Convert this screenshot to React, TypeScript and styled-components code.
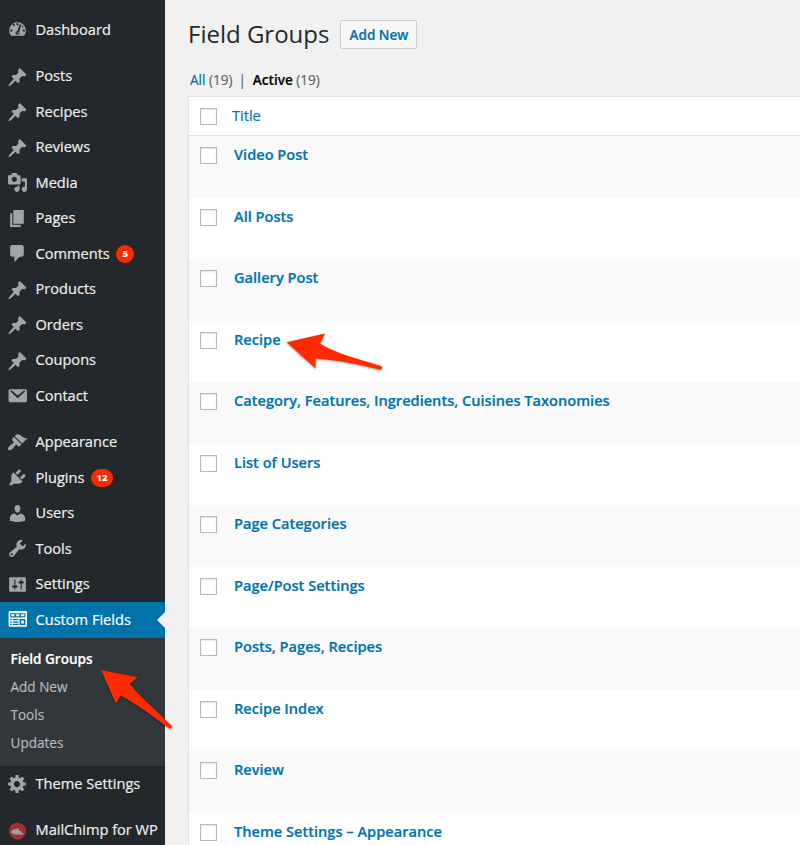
import React from "react";
import styled, { createGlobalStyle, css } from "styled-components";

const GlobalStyle = createGlobalStyle`
  * { box-sizing: border-box; }
  html, body { margin: 0; padding: 0; }
  body {
    height: 845px;
    overflow: hidden;
    background: #f1f1f1;
    font-family: "Open Sans", "Noto Sans", sans-serif;
    -webkit-font-smoothing: antialiased;
    -webkit-text-stroke: 0.2px currentColor;
  }
  ul { list-style: none; margin: 0; padding: 0; }
`;

const Shell = styled.div`
  position: relative;
  display: flex;
  width: 800px;
  height: 845px;
  overflow: hidden;
`;

const Sidebar = styled.nav`
  flex: 0 0 165px;
  height: 845px;
  padding-top: 12px;
  overflow: hidden;
  background: #22282b;
`;

const MenuList = styled.ul<{ $gap?: boolean }>`
  margin-bottom: ${(p) => (p.$gap ? "11px" : "0")};
`;

const MenuItem = styled.li<{ $active?: boolean }>`
  position: relative;
  display: flex;
  align-items: center;
  height: 35.5px;
  padding-left: 6.5px;
  font-size: 14.6px;
  line-height: 20px;
  white-space: nowrap;
  color: ${(p) => (p.$active ? "#fff" : "#eee")};
  ${(p) =>
    p.$active &&
    css`
      background: #0073aa;
      &::after {
        content: "";
        position: absolute;
        right: 0;
        top: 9.5px;
        border: 8.3px solid transparent;
        border-right-color: #f1f1f1;
        border-left-width: 0;
      }
    `}
`;

const MenuIcon = styled.svg<{ $active?: boolean }>`
  flex: none;
  width: 21px;
  height: 21px;
  margin-right: 8px;
  fill: ${(p) => (p.$active ? "#fff" : "#a0a5aa")};
`;

const MenuLabel = styled.span`
  padding-bottom: 2px;
`;

const Badge = styled.span`
  min-width: 18px;
  height: 18px;
  margin: 1px 0 0 6.5px;
  padding: 0 5.500px;
  border-radius: 9px;
  background: #ff2a00;
  color: #fff;
  font-size: 9.6px;
  font-weight: 700;
  line-height: 18px;
  text-align: center;
`;

const Submenu = styled.ul`
  height: 128.5px;
  padding: 7px 0 7px 10.5px;
  background: #32373c;
`;

const SubmenuItem = styled.li<{ $current?: boolean }>`
  height: 28.1px;
  font-size: 13.55px;
  line-height: 28.1px;
  font-weight: ${(p) => (p.$current ? 600 : 400)};
  color: ${(p) => (p.$current ? "#fff" : "#b4b9be")};
`;

const Main = styled.main`
  flex: 1;
  min-width: 0;
  padding-left: 23px;
`;

const TitleBar = styled.header`
  display: flex;
  align-items: flex-start;
  gap: 11px;
  height: 50px;
  padding-top: 19px;
`;

const PageTitle = styled.h1`
  margin: 0;
  font-size: 24px;
  font-weight: 400;
  line-height: 30px;
  color: #23282d;
  -webkit-text-stroke-width: 0;
`;

const AddButton = styled.a`
  width: 77px;
  height: 29px;
  margin-top: 1px;
  border: 1px solid #ccc;
  border-radius: 2px;
  background: #f7f7f7;
  color: #0073aa;
  font-size: 13.55px;
  font-weight: 600;
  line-height: 28px;
  text-align: center;
`;

const Filters = styled.ul`
  display: flex;
  height: 46px;
  padding: 19px 0 0 2px;
  font-size: 13.55px;
  line-height: 22px;
  color: #666;
`;

const FilterLabel = styled.a<{ $current?: boolean }>`
  margin-right: 3.5px;
  color: ${(p) => (p.$current ? "#000" : "#0073aa")};
  font-weight: ${(p) => (p.$current ? 600 : 400)};
`;

const Divider = styled.span`
  margin: 0 7px 0 6px;
`;

const Table = styled.div`
  width: 640px;
  height: 760px;
  border: 1px solid #e1e1e1;
  background: #fff;
`;

const HeadRow = styled.div`
  display: flex;
  align-items: center;
  gap: 15px;
  height: 39px;
  padding-left: 11px;
  border-bottom: 1px solid #e1e1e1;
  color: #0073aa;
  font-size: 14.6px;
`;

const HeadLabel = styled.span`
  padding-bottom: 2px;
`;

const Row = styled.div`
  display: flex;
  align-items: flex-start;
  gap: 17px;
  height: 61.56px;
  padding: 8px 0 0 11px;
  &:nth-child(even) {
    background: #f9f9f9;
  }
`;

const RowTitle = styled.a`
  color: #0073aa;
  font-size: 14.6px;
  font-weight: 600;
  line-height: 20px;
`;

const Checkbox = styled.span<{ $inRow?: boolean }>`
  flex: none;
  width: 17px;
  height: 17px;
  margin-top: ${(p) => (p.$inRow ? "3px" : "0")};
  border: 1px solid #b4b9be;
  background: #fff;
  box-shadow: inset 0 1px 2px rgba(0, 0, 0, 0.1);
`;

const Arrow = styled.svg<{ $x: number; $y: number }>`
  position: absolute;
  left: ${(p) => p.$x}px;
  top: ${(p) => p.$y}px;
  overflow: visible;
  fill: #ff2a00;
  filter: drop-shadow(0 1px 1px rgba(0, 0, 0, 0.35));
`;

const glyphs = {
  pin: "M10.44 3.72l1.82-1.82 6.36 6.35-1.83 1.82c-1.05-.68-2.48-.57-3.41.36l-.75.75c-.92.93-1.04 2.35-.35 3.41l-1.83 1.82-2.41-2.41-2.8 2.79c-.42.42-3.38 2.71-3.8 2.29s1.86-3.39 2.28-3.81l2.79-2.79L4.1 10.06l1.83-1.82c1.05.69 2.48.57 3.4-.36l.75-.75c.93-.92 1.05-2.35.36-3.41z",
  media:
    "M13 11V4c0-.55-.45-1-1-1h-1.67L9 1H5L3.67 3H2c-.55 0-1 .45-1 1v7c0 .55.45 1 1 1h10c.55 0 1-.45 1-1zM7 4.5c1.38 0 2.5 1.12 2.5 2.5S8.38 9.5 7 9.5 4.5 8.38 4.5 7 5.62 4.5 7 4.5zM14 6h5v10.5c0 1.38-1.12 2.5-2.5 2.5S14 17.88 14 16.5s1.12-2.5 2.5-2.5c.17 0 .34.02.5.05V9h-3V6zm-4 8.05V13h2v3.5c0 1.38-1.12 2.5-2.5 2.5S7 17.88 7 16.5 8.12 14 9.5 14c.17 0 .34.02.5.05z",
  page: "M6 15V2h10v13H6zm-1 1h8v2H3V5h2v11z",
  comment:
    "M5 2h9c1.1 0 2 .9 2 2v7c0 1.1-.9 2-2 2h-2l-5 5v-5H5c-1.1 0-2-.9-2-2V4c0-1.1.9-2 2-2z",
  mail: "M3 4h14.5c.83 0 1.5.67 1.5 1.500v9.500c0 .83-.67 1.500-1.500 1.500H3c-.83 0-1.500-.67-1.500-1.500V5.500C1.500 4.670 2.170 4 3 4zM3.700 5.400c-.5.300-.4.800-.1 1.100L10.200 12.600l6.700-6.100c.3-.3.400-.8-.1-1.100-.5-.3-.8-.1-1.100.1L10.200 10.100 4.800 5.500c-.3-.2-.6-.4-1.100-.1z",
  appearance:
    "M14.48 11.06L7.41 3.99l1.5-1.5c.5-.56 2.3-.47 3.51.32 1.21.8 1.43 1.28 2.91 2.1 1.18.64 2.45 1.26 4.45.85zm-.71.71L6.7 4.7 4.93 6.47c-.39.39-.39 1.02 0 1.41l1.06 1.06c.39.39.39 1.03 0 1.42-.6.6-1.43 1.11-2.21 1.69-.35.26-.7.53-1.01.84C1.43 14.23.4 16.08 1.4 17.07c.99 1 2.84-.03 4.18-1.36.31-.31.58-.66.85-1.02.57-.78 1.08-1.61 1.69-2.21.39-.39 1.02-.39 1.41 0l1.06 1.06c.39.39 1.02.39 1.41 0z",
  plugin:
    "M13.11 4.36L9.87 7.6 8 5.73l3.24-3.24c.35-.34 1.05-.2 1.56.32.52.51.66 1.21.31 1.55zm-8 1.77l.91-1.12 9.01 9.01-1.19.84c-.71.71-2.63 1.16-3.82 1.16H6.14L4.9 17.26c-.59.59-1.54.59-2.12 0-.59-.58-.59-1.53 0-2.12l1.24-1.24v-3.88c0-1.13.4-3.19 1.09-3.89zm7.26 3.97l3.24-3.24c.34-.35 1.04-.21 1.55.31.52.51.66 1.21.31 1.55l-3.24 3.25z",
  user: "M10 9.25c-2.27 0-2.73-3.44-2.73-3.44C7 4.02 7.82 2 9.97 2c2.16 0 2.98 2.02 2.71 3.81 0 0-.41 3.44-2.68 3.44zm0 2.57L12.720 10c2.390 0 4.520 2.330 4.520 4.530v2.490s-3.650 1.130-7.240 1.130c-3.650 0-7.240-1.130-7.240-1.130v-2.490c0-2.250 1.940-4.480 4.470-4.480z",
  wrench:
    "M16.68 9.77c-1.34 1.34-3.3 1.67-4.95.99l-5.41 6.52c-.99.99-2.59.99-3.58 0s-.99-2.59 0-3.57l6.52-5.42c-.68-1.65-.35-3.61.99-4.95 1.28-1.28 3.12-1.62 4.72-1.06l-2.89 2.89 2.82 2.82 2.86-2.87c.53 1.58.18 3.39-1.08 4.65zM3.81 16.21c.4.39 1.04.39 1.43 0 .4-.4.4-1.04 0-1.43-.39-.4-1.03-.4-1.43 0-.39.39-.39 1.03 0 1.43z",
  sliders:
    "M18 16V4c0-.55-.45-1-1-1H3c-.55 0-1 .45-1 1v12c0 .55.45 1 1 1h14c.55 0 1-.45 1-1zM8 11h1c.55 0 1 .45 1 1s-.45 1-1 1H8v1.5c0 .28-.22.5-.5.5s-.5-.22-.5-.5V13H6c-.55 0-1-.45-1-1s.45-1 1-1h1V5.5c0-.28.22-.5.5-.5s.5.22.5.5V11zm5-2h-1c-.55 0-1-.45-1-1s.45-1 1-1h1V5.5c0-.28.22-.5.5-.5s.5.22.5.5V7h1c.55 0 1 .45 1 1s-.45 1-1 1h-1v5.5c0 .28-.22.5-.5.5s-.5-.22-.5-.5V9z",
  fields:
    "M18 17H2.500c-.55 0-1-.45-1-1V3c0-.55.45-1 1-1H18c.55 0 1 .45 1 1v13c0 .55-.45 1-1 1zM3 4v4h14.500V4zM4 5h3.200v2H4zM8.700 5h3.200v2H8.700zM13.300 5h3.200v2h-3.200zM3 9.500v1.200h1.500V9.500zM5.500 9.500v1.200H11V9.500zM3 11.800v1.200h1.500v-1.200zM5.500 11.800v1.200H11v-1.200zM3 14.100v1.200h1.500v-1.200zM5.500 14.100v1.200H11v-1.200zM12 9.500v5.800h5.500V9.500zM13.500 11h2.600v2.800h-2.600z",
  gear: "M18 12h-2.18c-.17.7-.44 1.35-.81 1.93l1.54 1.54-2.1 2.1-1.54-1.54c-.58.36-1.23.63-1.91.79V19H8v-2.18c-.68-.16-1.33-.43-1.91-.79l-1.54 1.54-2.12-2.12 1.54-1.54c-.36-.58-.63-1.23-.79-1.91H1V9.03h2.17c.16-.7.44-1.35.8-1.94L2.43 5.55l2.1-2.1 1.54 1.54c.58-.37 1.24-.64 1.93-.81V2h3v2.18c.68.16 1.33.43 1.91.79l1.54-1.54 2.12 2.12-1.54 1.54c.36.59.64 1.24.8 1.94H18V12zm-8.5 1.5c1.66 0 3-1.34 3-3s-1.34-3-3-3-3 1.34-3 3 1.34 3 3 3z",
  gauge:
    "M3.76 16h12.48A8 8 0 1 0 3.76 16zM9 4h2v2H9zM5.200 5.700l1.300-1.300 1.300 1.300-1.300 1.300zM3 10h2v2H3zM15 10h2v2h-2zM13.900 7.400l1-1 1 1-1 1zM12.300 4.800l1.300.600-2 7.100c.500 1.500-.2 2.500-1.600 2.500s-2.300-1.200-1.700-2.300c.3-.7.900-1 1.500-1.100zM9.900 12.300v1.500h.9v-1.500z",
};

type Glyph = keyof typeof glyphs | "mailchimp";

function ItemIcon({ name, active }: { name: Glyph; active?: boolean }) {
  if (name === "mailchimp") {
    return (
      <MenuIcon viewBox="0 0 20 20">
        <circle cx="10" cy="10.500" r="8.200" fill="#a2302f" />
        <path d="M3.800 11.700l1-2.100 1.500.200.400-1.500 1.900.900 1.100-1.300 1.300.300.600 2.200 1.600-.5.700 2.200 1.700.400-.1 1.200-1.500.4-.700-.9-.6.900h-1.400l-.7-1.700-.6 1.700H8.500l-.2-1.500-.9 1.500-1.300-.2.100-1.600-1.200.6z" />
      </MenuIcon>
    );
  }
  return (
    <MenuIcon viewBox="0 0 20 20" $active={active}>
      <path fillRule="evenodd" d={glyphs[name]} />
    </MenuIcon>
  );
}

type Entry = { icon: Glyph; label: string; count?: number; active?: boolean };

const contentMenu: Entry[] = [
  { icon: "pin", label: "Posts" },
  { icon: "pin", label: "Recipes" },
  { icon: "pin", label: "Reviews" },
  { icon: "media", label: "Media" },
  { icon: "page", label: "Pages" },
  { icon: "comment", label: "Comments", count: 5 },
  { icon: "pin", label: "Products" },
  { icon: "pin", label: "Orders" },
  { icon: "pin", label: "Coupons" },
  { icon: "mail", label: "Contact" },
];

const adminMenu: Entry[] = [
  { icon: "appearance", label: "Appearance" },
  { icon: "plugin", label: "Plugins", count: 12 },
  { icon: "user", label: "Users" },
  { icon: "wrench", label: "Tools" },
  { icon: "sliders", label: "Settings" },
  { icon: "fields", label: "Custom Fields", active: true },
];

const submenu = ["Field Groups", "Add New", "Tools", "Updates"];

const fieldGroups = [
  "Video Post",
  "All Posts",
  "Gallery Post",
  "Recipe",
  "Category, Features, Ingredients, Cuisines Taxonomies",
  "List of Users",
  "Page Categories",
  "Page/Post Settings",
  "Posts, Pages, Recipes",
  "Recipe Index",
  "Review",
  "Theme Settings – Appearance",
];

function Menu({ items, gap }: { items: Entry[]; gap?: boolean }) {
  return (
    <MenuList $gap={gap}>
      {items.map((item) => (
        <MenuItem key={item.label} $active={item.active}>
          <ItemIcon name={item.icon} active={item.active} />
          <MenuLabel>{item.label}</MenuLabel>
          {item.count !== undefined && <Badge>{item.count}</Badge>}
        </MenuItem>
      ))}
    </MenuList>
  );
}

export default function App() {
  return (
    <>
      <GlobalStyle />
      <Shell>
        <Sidebar>
          <Menu items={[{ icon: "gauge", label: "Dashboard" }]} gap />
          <Menu items={contentMenu} gap />
          <Menu items={adminMenu} />
          <Submenu>
            {submenu.map((label, i) => (
              <SubmenuItem key={label} $current={i === 0}>
                {label}
              </SubmenuItem>
            ))}
          </Submenu>
          <Menu items={[{ icon: "gear", label: "Theme Settings" }]} gap />
          <Menu items={[{ icon: "mailchimp", label: "MailChimp for WP" }]} />
        </Sidebar>
        <Main>
          <TitleBar>
            <PageTitle>Field Groups</PageTitle>
            <AddButton>Add New</AddButton>
          </TitleBar>
          <Filters>
            <FilterLabel>All</FilterLabel>(19)
            <Divider>|</Divider>
            <FilterLabel $current>Active</FilterLabel>(19)
          </Filters>
          <Table>
            <HeadRow>
              <Checkbox />
              <HeadLabel>Title</HeadLabel>
            </HeadRow>
            {fieldGroups.map((title) => (
              <Row key={title}>
                <Checkbox $inRow />
                <RowTitle>{title}</RowTitle>
              </Row>
            ))}
          </Table>
        </Main>
        <Arrow $x={286} $y={333} width="98" height="37" viewBox="0 0 98 37">
          <path d="M0.500 9.300L39 0.500 34 10.500C49 20 72 26 94.500 32.700Q97 34 95.500 36Q95 37 93 36.500C74 31.500 52 27 29.700 25.500L29.500 35.500z" />
        </Arrow>
        <Arrow $x={101} $y={669} width="72" height="60" viewBox="0 0 72 60">
          <path d="M0 1L36.500 8.300 28.700 15C40 29 56 42 70.500 56.500Q71.500 58 70 59.300Q68.500 60 67 58.500C52 47.500 36 35 19.500 26.500L15 34.500z" />
        </Arrow>
      </Shell>
    </>
  );
}
